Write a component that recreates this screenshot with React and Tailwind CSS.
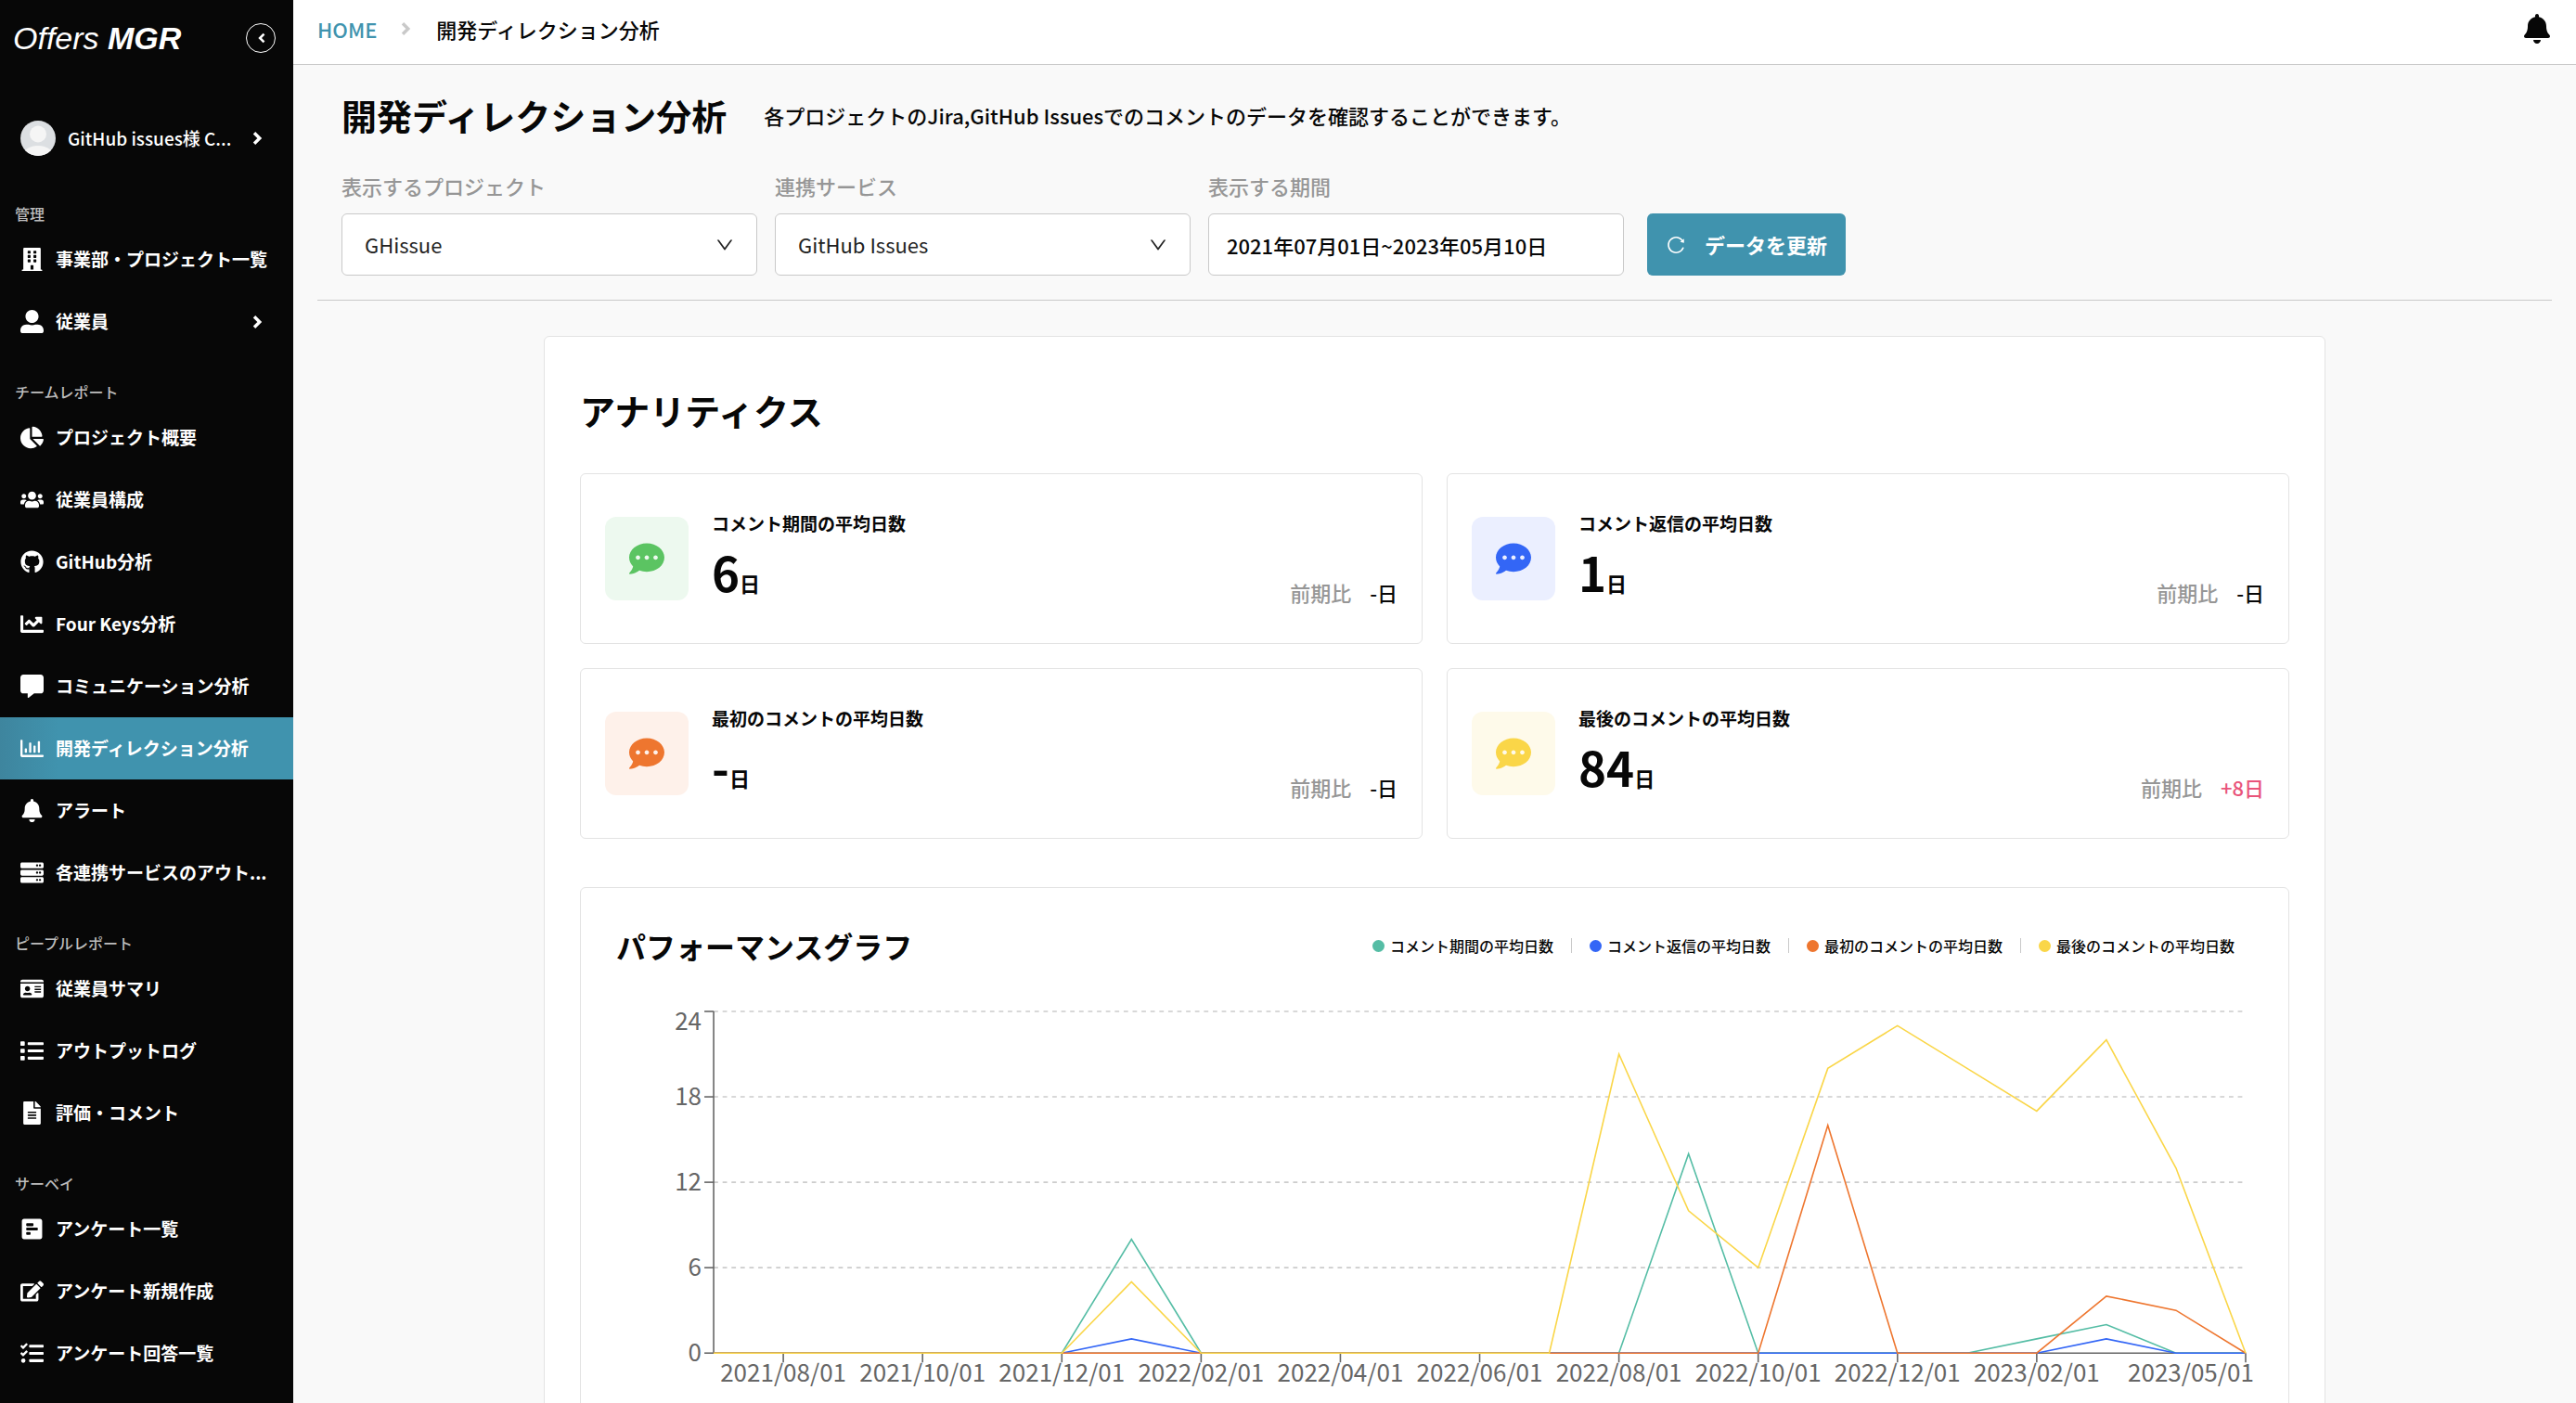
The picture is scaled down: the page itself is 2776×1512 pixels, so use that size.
import React from 'react';
import {
  FaBell, FaBuilding, FaChartLine, FaChartPie, FaCommentAlt, FaCommentDots, FaEdit, FaFileAlt,
  FaGithub, FaIdCard, FaList, FaPollH, FaRegChartBar, FaServer, FaTasks, FaUserAlt, FaUsers,
} from 'react-icons/fa';
import { AiOutlineDown, AiOutlineReload } from 'react-icons/ai';

const menu = [
  {
    title: '管理',
    items: [
      { label: '事業部・プロジェクト一覧', icon: FaBuilding },
      { label: '従業員', icon: FaUserAlt, expandable: true },
    ],
  },
  {
    title: 'チームレポート',
    items: [
      { label: 'プロジェクト概要', icon: FaChartPie },
      { label: '従業員構成', icon: FaUsers },
      { label: 'GitHub分析', icon: FaGithub },
      { label: 'Four Keys分析', icon: FaChartLine },
      { label: 'コミュニケーション分析', icon: FaCommentAlt },
      { label: '開発ディレクション分析', icon: FaRegChartBar, active: true },
      { label: 'アラート', icon: FaBell },
      { label: '各連携サービスのアウト...', icon: FaServer },
    ],
  },
  {
    title: 'ピープルレポート',
    items: [
      { label: '従業員サマリ', icon: FaIdCard },
      { label: 'アウトプットログ', icon: FaList },
      { label: '評価・コメント', icon: FaFileAlt },
    ],
  },
  {
    title: 'サーベイ',
    items: [
      { label: 'アンケート一覧', icon: FaPollH },
      { label: 'アンケート新規作成', icon: FaEdit },
      { label: 'アンケート回答一覧', icon: FaTasks },
    ],
  },
];

const stats = [
  { label: 'コメント期間の平均日数', value: '6', diff: '-日', box: 'bg-[#edf9ef]', icon: 'text-[#5bc462]' },
  { label: 'コメント返信の平均日数', value: '1', diff: '-日', box: 'bg-[#ebefff]', icon: 'text-[#3366f6]' },
  { label: '最初のコメントの平均日数', value: '-', diff: '-日', box: 'bg-[#fef1ea]', icon: 'text-[#ee762f]' },
  { label: '最後のコメントの平均日数', value: '84', diff: '+8日', up: true, box: 'bg-[#fefaea]', icon: 'text-[#fad648]' },
];

// one value per month, 2021/07 - 2023/05
const series = [
  { label: 'コメント期間の平均日数', color: '#55bda5', dot: 'bg-[#55bda5]', data: [0, 0, 0, 0, 0, 0, 8, 0, 0, 0, 0, 0, 0, 0, 14, 0, 0, 0, 0, 1, 2, 0, 0] },
  { label: 'コメント返信の平均日数', color: '#3366f6', dot: 'bg-[#3366f6]', data: [0, 0, 0, 0, 0, 0, 1, 0, 0, 0, 0, 0, 0, 0, 0, 0, 0, 0, 0, 0, 1, 0, 0] },
  { label: '最初のコメントの平均日数', color: '#ee762f', dot: 'bg-[#ee762f]', data: [0, 0, 0, 0, 0, 0, 0, 0, 0, 0, 0, 0, 0, 0, 0, 0, 16, 0, 0, 0, 4, 3, 0] },
  { label: '最後のコメントの平均日数', color: '#fad648', dot: 'bg-[#fad648]', data: [0, 0, 0, 0, 0, 0, 5, 0, 0, 0, 0, 0, 0, 21, 10, 6, 20, 23, 20, 17, 22, 13, 0] },
];

const xTicks = [
  { i: 1, label: '2021/08/01' },
  { i: 3, label: '2021/10/01' },
  { i: 5, label: '2021/12/01' },
  { i: 7, label: '2022/02/01' },
  { i: 9, label: '2022/04/01' },
  { i: 11, label: '2022/06/01' },
  { i: 13, label: '2022/08/01' },
  { i: 15, label: '2022/10/01' },
  { i: 17, label: '2022/12/01' },
  { i: 19, label: '2023/02/01' },
  { i: 22, label: '2023/05/01' },
];

const LEFT = 105;
const BASE = 378;
const px = (i) => LEFT + i * 75;
const py = (v) => BASE - (v * 46) / 3;

function Chevron({ className }) {
  return (
    <svg viewBox="0 0 12 16" fill="none" stroke="currentColor" strokeWidth="3.4" className={className}>
      <path d="M2 2.2 7.8 8 2 13.8" />
    </svg>
  );
}

function Sidebar() {
  return (
    <aside className="flex flex-col w-[316px] shrink-0 h-full bg-[#070707] text-white overflow-hidden">
      <div className="flex items-center justify-between h-[82px] pl-[14px] pr-[19px]">
        <a href="#" className="font-['Liberation_Sans',sans-serif] italic text-[34px] leading-[40px] whitespace-nowrap">
          Offers <span className="font-bold">MGR</span>
        </a>
        <button type="button" aria-label="メニューを閉じる" className="flex items-center justify-center w-8 h-8 rounded-full border border-white">
          <Chevron className="w-[9px] h-3 rotate-180" />
        </button>
      </div>
      <button type="button" className="flex items-center h-16 mt-[35px] mb-[7px] pl-[22px] pr-8 text-left">
        <svg viewBox="0 0 38 38" className="w-[38px] h-[38px] rounded-full shrink-0">
          <rect width="38" height="38" fill="#dcdfe2" />
          <circle cx="19" cy="14.5" r="9" fill="#f5f5f5" />
          <ellipse cx="19" cy="37" rx="16" ry="10" fill="#f5f5f5" />
        </svg>
        <span className="flex-1 ml-[13px] text-[19px] font-medium truncate">GitHub issues様 C...</span>
        <Chevron className="w-3 h-4 shrink-0" />
      </button>
      <nav>
        {menu.map((group) => (
          <div key={group.title}>
            <h2 className="pt-[31px] pb-[5px] px-4 text-[16px] leading-[22px] font-medium text-[#bdbdbd]">{group.title}</h2>
            <ul>
              {group.items.map((item) => (
                <li key={item.label}>
                  <a
                    href="#"
                    className={`flex items-center h-[67px] pl-[22px] ${item.expandable ? 'pr-8' : 'pr-6'} ${item.active ? 'bg-linear-to-r from-[#3e859e] to-[#4093ae] to-20%' : ''}`}
                  >
                    <item.icon className="w-[25px] h-[25px] shrink-0" />
                    <span className="flex-1 ml-[13px] text-[19px] font-bold whitespace-nowrap">{item.label}</span>
                    {item.expandable && <Chevron className="w-3 h-4 shrink-0" />}
                  </a>
                </li>
              ))}
            </ul>
          </div>
        ))}
      </nav>
    </aside>
  );
}

function SelectField({ id, label, value }) {
  return (
    <div>
      <label htmlFor={id} className="block text-[22px] leading-8 font-medium text-[#969696]">{label}</label>
      <div className="grid items-center mt-[14px]">
        <select id={id} defaultValue={value} className="col-start-1 row-start-1 appearance-none w-[448px] h-[67px] px-6 rounded-md border border-[#c9c9c9] bg-white text-[22px] text-[#222]">
          <option>{value}</option>
        </select>
        <AiOutlineDown className="col-start-1 row-start-1 justify-self-end mr-6 w-[22px] h-[22px] text-[#222] pointer-events-none" />
      </div>
    </div>
  );
}

function StatCard({ stat }) {
  return (
    <div className="flex items-center gap-[25px] h-[184px] px-[26px] rounded-md border border-[#e3e3e3] bg-white">
      <div className={`flex items-center justify-center w-[90px] h-[90px] rounded-xl shrink-0 ${stat.box}`}>
        <FaCommentDots className={`w-[38px] h-[38px] ${stat.icon}`} />
      </div>
      <div className="flex-1">
        <h3 className="text-[19px] leading-7 font-bold">{stat.label}</h3>
        <div className="flex items-end justify-between">
          <p className="text-[51px] leading-[76px] font-bold">
            {stat.value}<span className="text-[22px] leading-none">日</span>
          </p>
          <p className="flex gap-5 text-[22px] leading-8 font-medium">
            <span className="text-[#969696]">前期比</span>
            <span className={stat.up ? 'text-[#e9547a]' : ''}>{stat.diff}</span>
          </p>
        </div>
      </div>
    </div>
  );
}

function PerformanceChart() {
  return (
    <svg viewBox="0 0 1763 450" role="img" aria-label="パフォーマンスグラフ" className="block w-full text-[26px]">
      {[6, 12, 18, 24].map((v) => (
        <line key={v} x1={LEFT} x2={px(22)} y1={py(v)} y2={py(v)} stroke="#ccc" strokeWidth="1.6" strokeDasharray="4.8 4.8" />
      ))}
      <g stroke="#666" strokeWidth="1.6">
        <line x1={LEFT} x2={LEFT} y1={py(24)} y2={BASE} />
        <line x1={LEFT} x2={px(22)} y1={BASE} y2={BASE} />
        {[0, 6, 12, 18, 24].map((v) => (
          <line key={v} x1={LEFT - 10} x2={LEFT} y1={py(v)} y2={py(v)} />
        ))}
        {xTicks.map((t) => (
          <line key={t.i} x1={px(t.i)} x2={px(t.i)} y1={BASE} y2={BASE + 10} />
        ))}
      </g>
      <g fill="#666">
        {[0, 6, 12, 18, 24].map((v) => (
          <text key={v} x={LEFT - 13} y={v === 24 ? py(v) + 20 : py(v) + 9} textAnchor="end">{v}</text>
        ))}
        {xTicks.map((t) => (
          <text key={t.i} x={t.i === 22 ? 1696 : px(t.i)} y={BASE + 31} textAnchor="middle">{t.label}</text>
        ))}
      </g>
      {series.map((s) => (
        <polyline key={s.color} points={s.data.map((v, i) => `${px(i)},${py(v)}`).join(' ')} fill="none" stroke={s.color} strokeWidth="1.6" />
      ))}
    </svg>
  );
}

export default function App() {
  return (
    <div className="flex h-screen overflow-hidden bg-[#f9f9f9] text-[#070707] font-['Noto_Sans_CJK_JP',sans-serif]">
      <Sidebar />
      <div className="flex flex-col flex-1 min-w-0">
        {/* Header */}
        <header className="flex items-center justify-between h-[70px] px-[26px] pb-2 bg-white border-b border-[#c9c9c9] shrink-0">
          <nav className="flex items-center gap-[26px] text-[22px] leading-8 font-medium">
            <a href="#" className="text-[#4093ae]">HOME</a>
            <Chevron className="w-3 h-4 text-[#c9c9c9]" />
            <span>開発ディレクション分析</span>
          </nav>
          <button type="button" aria-label="通知">
            <FaBell className="w-8 h-8" />
          </button>
        </header>

        <main className="flex-1 overflow-y-auto [scrollbar-width:none] px-[26px]">
          {/* Filters */}
          <section className="pt-[26px] px-[26px] pb-[26px] border-b border-[#c9c9c9]">
            <div className="flex items-center gap-10">
              <h1 className="text-[38px] leading-[56px] font-bold">開発ディレクション分析</h1>
              <p className="text-[22px] leading-8 font-medium">各プロジェクトのJira,GitHub Issuesでのコメントのデータを確認することができます。</p>
            </div>
            <div className="flex items-end gap-[19px] mt-8">
              <SelectField id="project" label="表示するプロジェクト" value="GHissue" />
              <SelectField id="service" label="連携サービス" value="GitHub Issues" />
              <div>
                <label htmlFor="period" className="block text-[22px] leading-8 font-medium text-[#969696]">表示する期間</label>
                <input id="period" type="text" defaultValue="2021年07月01日~2023年05月10日" className="block mt-[14px] w-[448px] h-[67px] px-[19px] rounded-md border border-[#c9c9c9] bg-white text-[22px] font-medium" />
              </div>
              <button type="button" className="flex items-center gap-5 h-[67px] ml-[6px] px-5 rounded-md bg-[#4093ae] text-white text-[22px] font-bold">
                <AiOutlineReload className="w-[22px] h-[22px]" />
                データを更新
              </button>
            </div>
          </section>

          {/* Analytics */}
          <section className="max-w-[1920px] mx-auto mt-[38px] px-[38px] pt-[51px] pb-[38px] rounded-md border border-[#e3e3e3] bg-white">
            <h2 className="text-[38px] leading-[56px] font-bold">アナリティクス</h2>
            <div className="grid grid-cols-2 gap-[26px] mt-10">
              {stats.map((stat) => (
                <StatCard key={stat.label} stat={stat} />
              ))}
            </div>

            <div className="mt-[52px] px-[38px] pt-[38px] pb-6 rounded-md border border-[#e3e3e3]">
              <div className="flex items-center justify-between">
                <h2 className="text-[32px] leading-[48px] font-bold">パフォーマンスグラフ</h2>
                <ul className="flex items-center pr-5 text-[16px] leading-4 font-medium divide-x divide-[#c9c9c9]">
                  {series.map((s) => (
                    <li key={s.color} className="flex items-center gap-[6px] px-[19px] last:pr-0">
                      <span className={`w-[13px] h-[13px] rounded-full ${s.dot}`} />
                      {s.label}
                    </li>
                  ))}
                </ul>
              </div>
              <div className="mt-[37px]">
                <PerformanceChart />
              </div>
            </div>
          </section>
        </main>
      </div>
    </div>
  );
}
